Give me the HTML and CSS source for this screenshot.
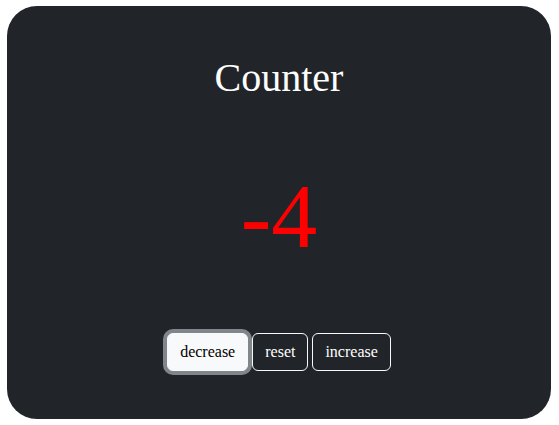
FILE: index.html
```html
<!DOCTYPE html>
<html>
<head>
<meta charset="utf-8">
<link rel="stylesheet" href="styles.css">
</head>
<body>
<div class="card">
  <h1 class="title">Counter</h1>
  <div class="value">-4</div>
  <div class="buttons">
    <button class="btn btn-light focused">decrease</button>
    <button class="btn btn-outline">reset</button>
    <button class="btn btn-outline">increase</button>
  </div>
</div>
</body>
</html>
```
FILE: styles.css
```css
html, body {
  margin: 0;
  padding: 0;
  background: #ffffff;
}
body {
  padding: 6px 8px 6px 7px;
  font-family: "Liberation Serif", "Times New Roman", serif;
}
.card {
  box-sizing: border-box;
  width: 544px;
  height: 413px;
  background: #212529;
  border-radius: 30px;
  display: flex;
  flex-direction: column;
  align-items: center;
  color: #ffffff;
}
.title {
  margin: 48px 0 0 0;
  font-size: 40px;
  font-weight: normal;
  line-height: 48px;
}
.value {
  margin-top: 59px;
  font-size: 92px;
  line-height: 110px;
  color: #ff0000;
}
.buttons {
  margin-top: 62px;
  display: flex;
  gap: 4px;
}
.btn {
  font-family: "Liberation Serif", "Times New Roman", serif;
  font-size: 16px;
  line-height: 24px;
  padding: 6px 12px;
  border-radius: 6px;
  border: 1px solid #f8f9fa;
  background: transparent;
  color: #ffffff;
  cursor: pointer;
}
.btn-light {
  background: #f8f9fa;
  color: #000000;
}
.focused {
  box-shadow: 0 0 0 4px #80868b;
}
```
